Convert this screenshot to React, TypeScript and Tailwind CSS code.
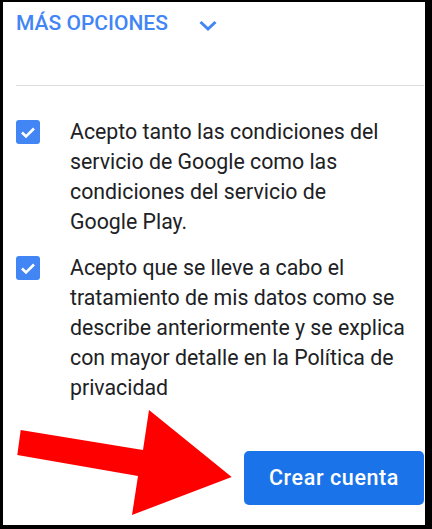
export default function App() {
  return (
    <div className="w-[432px] h-[529px] bg-black pt-[2px] pl-[3px] pr-[7px] pb-[4px]">
      <div
        className="relative h-full bg-white pl-[13px] pr-px overflow-hidden"
        style={{ fontFamily: "Roboto, 'Noto Sans', sans-serif" }}
      >
        {/* Más opciones */}
        <div className="mt-[9px] flex items-center h-[24px]">
          <span className="text-[21px] leading-[24px] font-medium text-[#4285f4]">MÁS OPCIONES</span>
          <svg className="ml-[31px] mt-[2px]" width="18" height="24" viewBox="0 0 18 24">
            <polyline points="1.5,10 9,17 16.5,10" fill="none" stroke="#4285f4" strokeWidth="3" />
          </svg>
        </div>

        <div className="mt-[50px] h-px bg-[#dadce0]" />

        {/* Checkboxes */}
        <div className="mt-[31px] flex flex-col gap-[16px]">
          <Row text={"Acepto tanto las condiciones del servicio de Google como las condiciones del servicio de Google\u00a0Play."} />
          <Row text="Acepto que se lleve a cabo el tratamiento de mis datos como se describe anteriormente y se explica con mayor detalle en la Política de privacidad" />
        </div>

        <div className="mt-[48px] flex justify-end">
          <button className="w-[180px] h-[54px] rounded-[5px] bg-[#1a73e8] text-white text-[21.5px] font-medium tracking-[0.6px]">
            Crear cuenta
          </button>
        </div>

        {/* red annotation arrow */}
        <svg
          className="absolute left-[-3px] top-[-2px] pointer-events-none"
          width="432"
          height="529"
          viewBox="0 0 432 529"
        >
          <polygon
            points="20.7,430 143,450 149,410 231.7,477 132,515 138,476 17.3,455"
            fill="#ff0000"
          />
        </svg>
      </div>
    </div>
  )
}

function Row({ text }: { text: string }) {
  return (
    <div className="flex">
      <div className="mt-[3px] w-6 h-6 shrink-0 rounded-[3px] bg-[#4285f4] flex items-center justify-center">
        <svg width="24" height="24" viewBox="0 0 24 24">
          <polyline points="6,12.5 10,16.5 18,8.5" fill="none" stroke="white" strokeWidth="2.6" />
        </svg>
      </div>
      <p className="ml-[30px] text-[21.3px] leading-[30px] text-[#202124]">{text}</p>
    </div>
  )
}
